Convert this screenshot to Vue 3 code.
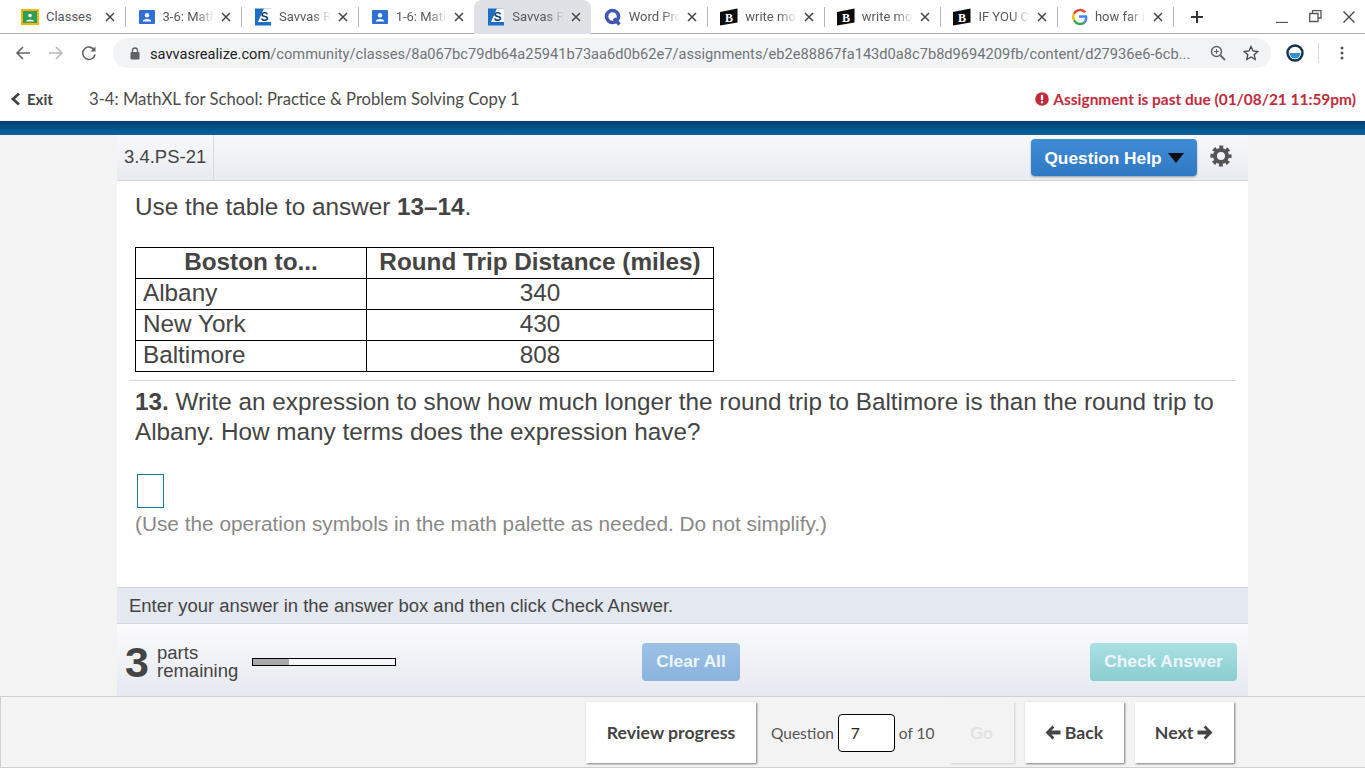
<template>
  <div class="page">
    <div class="tabstrip">
      <div
        v-for="tab in tabs"
        :key="tab.id"
        class="tab"
        :class="{ active: tab.active, nosep: tab.nosep }"
      >
        <svg class="favicon" width="18" height="18" viewBox="0 0 18 18">
          <template v-if="tab.icon === 'classroom'">
            <rect x="0" y="1" width="18" height="16" fill="#f4b400" />
            <rect x="2" y="3" width="14" height="12" fill="#2f9e57" />
            <circle cx="9" cy="7.500" r="1.800" fill="#fff" />
            <path d="M5 13.500c.4-2.800 7.600-2.800 8 0z" fill="#fff" />
          </template>
          <template v-else-if="tab.icon === 'person'">
            <rect x="1" y="2" width="16" height="14" rx="1" fill="#2f6fd6" />
            <circle cx="9" cy="7.200" r="2.200" fill="#fff" />
            <path d="M4.800 13.500c.4-3.200 8-3.200 8.400 0z" fill="#fff" />
          </template>
          <template v-else-if="tab.icon === 'savvas'">
            <rect x="1" y="0.500" width="16" height="17" fill="#1c6fc4" />
            <path d="M10 0.500H17V14H4z" fill="#fff" />
            <text x="10.500" y="13" class="fav-s">S</text>
          </template>
          <template v-else-if="tab.icon === 'quizlet'">
            <circle cx="8.500" cy="8.500" r="6" fill="none" stroke="#4257b2" stroke-width="3.600" />
            <path d="M10 10.500l5.500 6" stroke="#4257b2" stroke-width="3.400" />
          </template>
          <template v-else-if="tab.icon === 'brainly'">
            <path d="M0 4L17.500 0.500V14.500L0 17.500z" fill="#0b0b0b" />
            <text x="9" y="13.500" class="fav-b">B</text>
          </template>
          <template v-else>
            <path d="M15.300 4.300A7 7 0 0 0 4 5.800" fill="none" stroke="#ea4335" stroke-width="2.400" />
            <path d="M4 5.800a7 7 0 0 0 0 6.400" fill="none" stroke="#fbbc05" stroke-width="2.400" />
            <path d="M4 12.200a7 7 0 0 0 10.500 2.300" fill="none" stroke="#34a853" stroke-width="2.400" />
            <path d="M14.500 14.500A7 7 0 0 0 16 8.500H9" fill="none" stroke="#4285f4" stroke-width="2.400" />
          </template>
        </svg>
        <span class="tab-title" :class="{ nofade: tab.nofade }">{{ tab.title }}</span>
        <svg class="tab-close" width="10" height="10" viewBox="0 0 10 10">
          <path d="M1 1l8 8M9 1l-8 8" stroke="#444" stroke-width="1.500" />
        </svg>
      </div>
      <svg class="newtab" width="14" height="14" viewBox="0 0 14 14">
        <path d="M7 1v12M1 7h12" stroke="#333" stroke-width="2" />
      </svg>
      <div class="winbtns">
        <svg width="12" height="12" viewBox="0 0 12 12"><path d="M0 11.500h12" stroke="#555" stroke-width="1.300" /></svg>
        <svg width="13" height="13" viewBox="0 0 13 13">
          <path d="M3.500 3V0.700H12V8H9.500M0.700 3.500H9V11.500H0.700z" fill="none" stroke="#555" stroke-width="1.300" />
        </svg>
        <svg width="12" height="12" viewBox="0 0 12 12"><path d="M0.500 0.500l11 11M11.500 0.500l-11 11" stroke="#444" stroke-width="1.300" /></svg>
      </div>
    </div>

    <div class="toolbar">
      <svg class="nav-ic" width="16" height="16" viewBox="0 0 16 16">
        <path d="M15 8H2M8 2L2 8l6 6" fill="none" stroke="#5f6368" stroke-width="1.600" />
      </svg>
      <svg class="nav-ic" width="16" height="16" viewBox="0 0 16 16">
        <path d="M1 8h13M8 2l6 6-6 6" fill="none" stroke="#b8babd" stroke-width="1.600" />
      </svg>
      <svg class="nav-ic" width="16" height="16" viewBox="0 0 16 16">
        <path d="M13.500 5.500A6.200 6.200 0 1 0 14 9.500" fill="none" stroke="#5f6368" stroke-width="1.600" />
        <path d="M14.500 1.500V6.500H9.500z" fill="#5f6368" />
      </svg>
      <div class="omnibox">
        <svg width="10" height="13" viewBox="0 0 10 13">
          <rect x="0.500" y="5" width="9" height="7.500" rx="1" fill="#5f6368" />
          <path d="M2.500 5V3.500a2.500 2.500 0 0 1 5 0V5" fill="none" stroke="#5f6368" stroke-width="1.300" />
        </svg>
        <span class="url"><span class="host">savvasrealize.com</span>/community/classes/8a067bc79db64a25941b73aa6d0b62e7/assignments/eb2e88867fa143d0a8c7b8d9694209fb/content/d27936e6-6cb...</span>
        <svg class="zoom-ic" width="16" height="16" viewBox="0 0 16 16">
          <circle cx="6.500" cy="6.500" r="5" fill="none" stroke="#5f6368" stroke-width="1.500" />
          <path d="M10.500 10.500L15 15" stroke="#5f6368" stroke-width="1.800" />
          <path d="M4 6.500h5M6.500 4v5" stroke="#5f6368" stroke-width="1.100" />
        </svg>
        <svg width="16" height="16" viewBox="0 0 16 16">
          <path d="M8 1.500l2 4.500 4.800.5-3.600 3.200 1 4.800L8 12l-4.200 2.500 1-4.800L1.200 6.500 6 6z" fill="none" stroke="#444" stroke-width="1.300" />
        </svg>
      </div>
      <svg class="ext" width="18" height="18" viewBox="0 0 18 18">
        <circle cx="9" cy="9" r="7.500" fill="#fff" stroke="#12324f" stroke-width="2.400" />
        <path d="M3.500 9h11a5.500 5.500 0 0 1-11 0z" fill="#2f8fd8" />
      </svg>
      <span class="toolsep"></span>
      <svg width="4" height="14" viewBox="0 0 4 14">
        <circle cx="2" cy="2" r="1.500" fill="#555" />
        <circle cx="2" cy="7" r="1.500" fill="#555" />
        <circle cx="2" cy="12" r="1.500" fill="#555" />
      </svg>
    </div>

    <header class="assign-bar">
      <a class="exit">
        <svg width="11" height="14" viewBox="0 0 11 14">
          <path d="M9 1.500L3 7l6 5.500" fill="none" stroke="#444" stroke-width="2.800" />
        </svg>
        Exit
      </a>
      <span class="assign-title">3-4: MathXL for School: Practice &amp; Problem Solving Copy 1</span>
      <span class="past-due">
        <svg width="14" height="14" viewBox="0 0 14 14">
          <circle cx="7" cy="7" r="6.800" fill="#c22a3c" />
          <rect x="5.900" y="2.800" width="2.200" height="5.400" fill="#fff" />
          <rect x="5.900" y="9.200" width="2.200" height="2.100" fill="#fff" />
        </svg>
        Assignment is past due (01/08/21 11:59pm)
      </span>
    </header>
    <div class="blue-bar"></div>

    <main class="stage">
      <section class="panel">
        <div class="panel-head">
          <div class="q-id">3.4.PS-21</div>
          <div class="head-right">
            <button class="help-btn">
              Question Help
              <span class="caret"></span>
            </button>
            <svg class="gear" width="22" height="22" viewBox="0 0 22 22">
              <circle cx="11" cy="11" r="8.700" fill="none" stroke="#555" stroke-width="3.800" stroke-dasharray="3.800 3.030" stroke-dashoffset="1.900" />
              <circle cx="11" cy="11" r="6" fill="none" stroke="#555" stroke-width="4" />
            </svg>
          </div>
        </div>

        <div class="question">
          <p class="lead">Use the table to answer <b>13–14</b>.</p>
          <table class="dist-table">
            <thead>
              <tr>
                <th class="c1">Boston to...</th>
                <th>Round Trip Distance (miles)</th>
              </tr>
            </thead>
            <tbody>
              <tr v-for="row in rows" :key="row.city">
                <td>{{ row.city }}</td>
                <td class="num">{{ row.miles }}</td>
              </tr>
            </tbody>
          </table>
          <div class="rule"></div>
          <p class="prompt">
            <b>13.</b> Write an expression to show how much longer the round trip to Baltimore is than the round trip to Albany. How many terms does the expression have?
          </p>
          <div class="answer-box"></div>
          <p class="hint">(Use the operation symbols in the math palette as needed. Do not simplify.)</p>
        </div>

        <div class="instruction">Enter your answer in the answer box and then click Check Answer.</div>

        <div class="panel-foot">
          <div class="parts">
            <span class="parts-num">3</span>
            <span class="parts-text">parts<br />remaining</span>
            <div class="progress"><div class="progress-fill" :style="{ width: progress + '%' }"></div></div>
          </div>
          <button class="foot-btn clear">Clear All</button>
          <button class="foot-btn check">Check Answer</button>
        </div>
      </section>
    </main>

    <nav class="bottom-nav">
      <button class="nav-btn review">Review progress</button>
      <span class="q-label">Question</span>
      <div class="q-input">7</div>
      <span class="q-of">of 10</span>
      <button class="nav-btn go">Go</button>
      <button class="nav-btn back">
        <svg width="16" height="15" viewBox="0 0 15 14">
          <path d="M7 0.500L0.500 7 7 13.500l1.800-1.800L6 8.800h8.500V5.200H6l2.800-2.900z" fill="#444" />
        </svg>
        Back
      </button>
      <button class="nav-btn next">
        Next
        <svg width="16" height="15" viewBox="0 0 15 14">
          <path d="M8 0.500L14.500 7 8 13.500l-1.800-1.800L9 8.800H0.500V5.200H9L6.200 2.300z" fill="#444" />
        </svg>
      </button>
    </nav>
  </div>
</template>

<script setup>
const tabs = [
  { id: 1, icon: 'classroom', title: 'Classes', nofade: true },
  { id: 2, icon: 'person', title: '3-6: Math' },
  { id: 3, icon: 'savvas', title: 'Savvas Realize' },
  { id: 4, icon: 'person', title: '1-6: Math', nosep: true },
  { id: 5, icon: 'savvas', title: 'Savvas Realize', active: true, nosep: true },
  { id: 6, icon: 'quizlet', title: 'Word Problems' },
  { id: 7, icon: 'brainly', title: 'write most' },
  { id: 8, icon: 'brainly', title: 'write most' },
  { id: 9, icon: 'brainly', title: 'IF YOU CAN' },
  { id: 10, icon: 'google', title: 'how far is' },
]

const rows = [
  { city: 'Albany', miles: 340 },
  { city: 'New York', miles: 430 },
  { city: 'Baltimore', miles: 808 },
]

const progress = 25
</script>

<style>
html,
body {
  margin: 0;
  background: #f3f3f3;
}
</style>

<style scoped>
.page {
  height: 768px;
  width: 1365px;
  display: flex;
  flex-direction: column;
  overflow: hidden;
  font-family: "Liberation Sans", Arial, sans-serif;
  color: #444;
}

/* browser chrome */
.tabstrip {
  height: 34px;
  box-sizing: border-box;
  padding-left: 8px;
  display: flex;
  align-items: center;
  background: #fff;
  border-bottom: 1px solid #a9abae;
}
.tab {
  width: 116.55px;
  height: 34px;
  box-sizing: border-box;
  padding: 0 10px 0 13px;
  display: flex;
  align-items: center;
  gap: 7px;
  position: relative;
  font-family: Roboto, sans-serif;
  font-size: 13px;
  color: #55585c;
}
.tab::after {
  content: "";
  position: absolute;
  right: -1px;
  top: 7px;
  height: 20px;
  width: 1px;
  background: #b4b6b9;
}
.tab.nosep::after {
  display: none;
}
.tab.active {
  background: #dee1e6;
  border-radius: 8px 8px 0 0;
}
.favicon {
  flex: none;
}
.fav-s {
  font: bold 12px "Liberation Sans", sans-serif;
  fill: #123f73;
  text-anchor: middle;
}
.fav-b {
  font: bold 12px "Liberation Serif", serif;
  fill: #fff;
  text-anchor: middle;
}
.tab-title {
  flex: 1;
  white-space: nowrap;
  overflow: hidden;
  -webkit-mask-image: linear-gradient(90deg, #000 65%, transparent 100%);
  mask-image: linear-gradient(90deg, #000 65%, transparent 100%);
}
.tab-title.nofade {
  -webkit-mask-image: none;
  mask-image: none;
}
.tab-close {
  flex: none;
}
.newtab {
  margin-left: 16.500px;
}
.winbtns {
  margin-left: auto;
  display: flex;
  align-items: center;
  gap: 21px;
  padding-right: 10px;
}

.toolbar {
  height: 38px;
  box-sizing: border-box;
  padding: 0 19px 0 15px;
  display: flex;
  align-items: center;
  background: #fff;
}
.nav-ic {
  margin-right: 17px;
}
.omnibox {
  width: 1158px;
  height: 30px;
  box-sizing: border-box;
  margin-left: -1px;
  padding: 0 12px 0 17px;
  display: flex;
  align-items: center;
  gap: 10px;
  background: #f1f3f4;
  border-radius: 15px;
  font-family: Roboto, sans-serif;
  font-size: 14.65px;
  color: #70757a;
}
.url {
  flex: 1;
  white-space: nowrap;
  overflow: hidden;
  padding-top: 2px;
}
.host {
  color: #202124;
}
.zoom-ic {
  margin-right: 7px;
}
.ext {
  margin-left: 15px;
}
.toolsep {
  width: 1px;
  height: 20px;
  background: #d5d6d8;
  margin: 0 21px 0 14px;
}

/* assignment header */
.assign-bar {
  height: 49px;
  box-sizing: border-box;
  padding: 5px 9px 0 10px;
  display: flex;
  align-items: center;
  background: #fff;
  font-family: Lato, sans-serif;
}
.exit {
  width: 79px;
  display: flex;
  align-items: center;
  gap: 6px;
  font-weight: 700;
  font-size: 15px;
  color: #444;
}
.assign-title {
  font-size: 16.65px;
  color: #4a4a4a;
}
.past-due {
  margin-left: auto;
  display: flex;
  align-items: center;
  gap: 4px;
  font-weight: 700;
  font-size: 15.45px;
  color: #c22a3c;
}
.blue-bar {
  height: 14px;
  background: linear-gradient(#023b6b, #00619d 80%, #1c5f92);
  flex: none;
}

/* question panel */
.stage {
  flex: 1;
  min-height: 0;
  display: flex;
  justify-content: center;
  background: #f3f3f3;
}
.panel {
  width: 1131px;
  display: flex;
  flex-direction: column;
  background: #fff;
}
.panel-head {
  height: 46px;
  flex: none;
  box-sizing: border-box;
  display: flex;
  justify-content: space-between;
  background: linear-gradient(#f8f9fb, #e7eaf0);
  border-bottom: 1px solid #d3d6db;
}
.q-id {
  width: 97px;
  box-sizing: border-box;
  padding-left: 7px;
  border-right: 1px solid #d8dadf;
  font-size: 18.5px;
  line-height: 44px;
}
.head-right {
  display: flex;
  align-items: flex-start;
  padding-top: 4px;
  padding-right: 16px;
  gap: 13px;
}
.help-btn {
  width: 166px;
  height: 37px;
  border: 0;
  border-radius: 4px;
  padding: 1px 0 0;
  display: flex;
  align-items: center;
  justify-content: center;
  gap: 6px;
  background: linear-gradient(#3e8cd6, #3079c2);
  box-shadow: 0 1px 2px rgba(0, 0, 0, 0.35);
  color: #fff;
  font-family: "Liberation Sans", sans-serif;
  font-weight: 700;
  font-size: 17.3px;
}
.caret {
  width: 0;
  height: 0;
  border-left: 8px solid transparent;
  border-right: 8px solid transparent;
  border-top: 10px solid #0b0b0b;
}
.gear {
  margin-top: 6px;
}
.question {
  flex: 1;
  min-height: 0;
  padding: 0 12px;
  font-size: 24.3px;
}
.lead {
  margin: 0;
  padding-left: 6px;
  height: 66px;
  line-height: 52px;
}
.dist-table {
  margin-left: 6px;
  border-collapse: collapse;
  width: 579px;
  table-layout: fixed;
  line-height: 28px;
}
.dist-table th,
.dist-table td {
  border: 1px solid #000;
  padding: 0 7px 2px;
  height: 28px;
  color: #444;
}
.dist-table th {
  font-weight: 700;
}
.dist-table .c1 {
  width: 216px;
}
.num {
  text-align: center;
}
.rule {
  height: 1px;
  margin-top: 8px;
  background: #d8d8d8;
}
.prompt {
  margin: 6px 0 0;
  padding: 0 6px;
  line-height: 30px;
}
.answer-box {
  width: 25px;
  height: 32px;
  margin: 27px 0 0 8px;
  border: 1px solid #0e7c8e;
}
.hint {
  margin: 0;
  padding-left: 6px;
  color: #888;
  font-size: 20.8px;
  line-height: 32px;
}
.instruction {
  height: 37px;
  flex: none;
  box-sizing: border-box;
  padding-left: 12px;
  background: #e4e8f0;
  border-top: 1px solid #d3d6db;
  border-bottom: 1px solid #d3d6db;
  font-size: 18.45px;
  line-height: 35px;
}
.panel-foot {
  height: 72px;
  flex: none;
  box-sizing: border-box;
  padding: 3px 11px 0 8px;
  display: flex;
  align-items: center;
  justify-content: space-between;
  background: linear-gradient(#fbfbfd, #e6e9f1);
}
.parts {
  width: 388px;
  display: flex;
  align-items: center;
}
.parts-num {
  width: 32px;
  font-weight: 700;
  font-size: 43px;
  line-height: 46px;
}
.parts-text {
  font-size: 18.5px;
  line-height: 18px;
}
.progress {
  width: 144px;
  height: 8px;
  margin-left: 14px;
  box-sizing: border-box;
  border: 1px solid #000;
  background: #f5f5f7;
}
.progress-fill {
  height: 100%;
  background: #aaa;
}
.foot-btn {
  height: 38px;
  border: 0;
  border-radius: 4px;
  padding: 0;
  color: #eef5fb;
  font-family: "Liberation Sans", sans-serif;
  font-weight: 700;
  font-size: 17.3px;
}
.clear {
  width: 98px;
  margin-left: 129px;
  background: linear-gradient(#9cc1e6, #8ab3dd);
}
.check {
  width: 147px;
  margin-left: auto;
  background: linear-gradient(#aae0e3, #8bcdcf);
}

/* bottom navigation */
.bottom-nav {
  height: 72px;
  flex: none;
  box-sizing: border-box;
  padding: 5px 0 4px 585px;
  display: flex;
  align-items: center;
  background: #f3f3f3;
  border: 1px solid #cfcfcf;
  border-right: 0;
  font-family: Lato, sans-serif;
  font-size: 15.5px;
  color: #555;
}
.nav-btn {
  height: 61px;
  border: 0;
  padding: 0;
  display: flex;
  align-items: center;
  justify-content: center;
  gap: 4px;
  background: #fff;
  box-shadow: 1px 1px 2px rgba(0, 0, 0, 0.5);
  color: #444;
  font-family: Lato, sans-serif;
  font-weight: 700;
  font-size: 17.7px;
}
.review {
  width: 170px;
}
.q-label {
  margin-left: 15px;
}
.q-input {
  width: 57px;
  height: 38px;
  box-sizing: border-box;
  margin-left: 4px;
  padding-left: 12px;
  border: 1px solid #000;
  border-radius: 4px;
  background: #fff;
  color: #222;
  line-height: 37px;
}
.q-of {
  margin-left: 4px;
}
.go {
  width: 64px;
  margin-left: 15px;
  background: #f3f3f3;
  box-shadow: 1px 1px 2px rgba(0, 0, 0, 0.15);
  color: #e2e2e2;
}
.back {
  width: 99px;
  margin-left: 11px;
}
.next {
  width: 99px;
  margin-left: 11px;
}
</style>
